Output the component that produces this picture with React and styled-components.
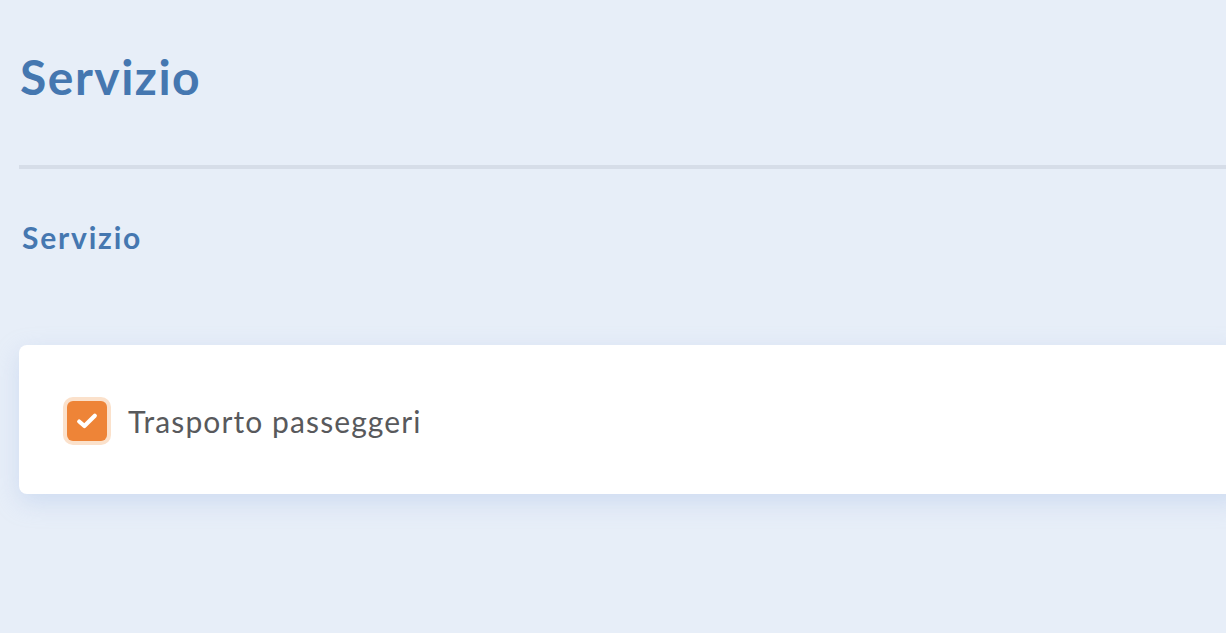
import React, { useState } from 'react'
import styled, { createGlobalStyle } from 'styled-components';

const GlobalStyle = createGlobalStyle`
    html, body {
        margin: 0;
        padding: 0;
        background: #e7eef8;
        overflow: hidden;
    }
    body {
        font-family: 'Lato', 'Noto Sans', sans-serif;
    }
`;

const Page = styled.div`
    min-height: 633px;
    padding: 47px 0 0 19px;
    box-sizing: border-box;
`;

const Title = styled.h1`
    margin: 0 0 0 1px;
    font-size: 48px;
    font-weight: 700;
    color: #4577b0;
    line-height: 60px;
    letter-spacing: 1.5px;
`;

const Divider = styled.div`
    height: 4px;
    background: #d6dde8;
    margin: 58px -20px 0 0;
`;

const SubTitle = styled.h2`
    margin: 50px 0 0 3px;
    font-size: 30px;
    font-weight: 700;
    color: #4577b0;
    line-height: 36px;
    letter-spacing: 1.8px;
`;

const Card = styled.div`
    margin: 90px -20px 0 0;
    height: 149px;
    background: #ffffff;
    border-radius: 8px;
    box-shadow: 0 8px 24px rgba(160, 185, 230, 0.35);
    display: flex;
    align-items: center;
    padding-left: 48px;
`;

const Option = styled.label`
    display: flex;
    align-items: center;
    gap: 21px;
    cursor: pointer;
    margin-top: 2px;
`;

const Box = styled.span`
    width: 40px;
    height: 40px;
    border-radius: 6px;
    background: ${props => props.checked ? '#ee8437' : '#ffffff'};
    border: ${props => props.checked ? 'none' : '2px solid #c9d2de'};
    box-shadow: 0 0 0 4px ${props => props.checked ? '#fbe1cb' : 'transparent'};
    display: flex;
    align-items: center;
    justify-content: center;
    box-sizing: border-box;
`;

const Label = styled.span`
    font-size: 30px;
    font-weight: 400;
    color: #58595c;
    letter-spacing: 1.1px;
`;

export default function App() {
    const [checked, setChecked] = useState(true);

    return (
        <Page>
            <GlobalStyle />
            <Title>Servizio</Title>
            <Divider />
            <SubTitle>Servizio</SubTitle>
            <Card>
                <Option onClick={() => setChecked(!checked)}>
                    <Box checked={checked}>
                        {checked ? (
                            <svg width="22" height="18" viewBox="0 0 22 18">
                                <path d="M3.2 9.5 L8.4 14 L18.8 3.8" fill="none" stroke="#ffffff" strokeWidth="4.2" strokeLinecap="round" strokeLinejoin="round" />
                            </svg>
                        ) : null}
                    </Box>
                    <Label>Trasporto passeggeri</Label>
                </Option>
            </Card>
        </Page>
    )
}
